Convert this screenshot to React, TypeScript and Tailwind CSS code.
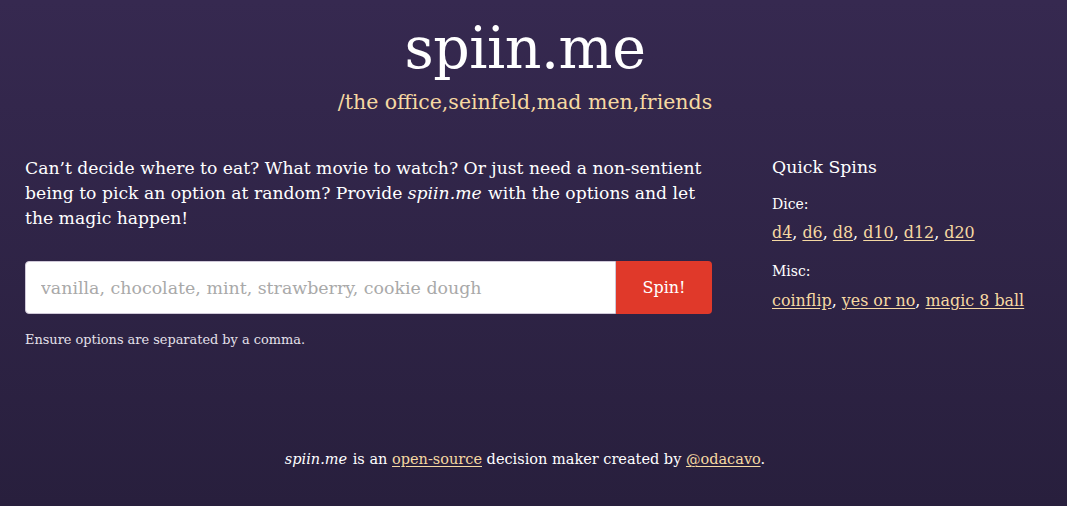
const slab = { fontFamily: '"DejaVu Serif", "Liberation Serif", serif' };

const dice = ["d4", "d6", "d8", "d10", "d12", "d20"];
const misc = ["coinflip", "yes or no", "magic 8 ball"];

const LinkList = ({ items }: { items: string[] }) => (
  <p className="text-[15.9px] leading-6">
    {items.map((item, i) => (
      <span key={item}>
        <a href="#" className="text-[#f6d9a2] underline underline-offset-2">
          {item}
        </a>
        {i < items.length - 1 && ", "}
      </span>
    ))}
  </p>
);

export default function App() {
  return (
    <div
      className="min-h-[506px] w-full bg-gradient-to-b from-[#362950] to-[#281f3d] text-white"
      style={slab}
    >
      <header className="flex flex-col items-center pt-[14px] pr-[17px]">
        <h1 className="text-[57px] leading-[68px] tracking-[-0.5px]">spiin.me</h1>
        <p className="mt-[8px] text-[20.5px] leading-6 text-[#f6d9a2]">
          /the office,seinfeld,mad men,friends
        </p>
      </header>

      <main className="mt-[42px] grid grid-cols-[687px_1fr] gap-[60px] px-[25px]">
        <section>
          <p className="text-[17.2px] leading-[25px]">
            Can’t decide where to eat? What movie to watch? Or just need a non-sentient
            being to pick an option at random? Provide <em className="pr-[1px]">spiin.me</em> with
            the options and let the magic happen!
          </p>

          <form className="mt-[30px] flex h-[53px] rounded-[4px]" onSubmit={(e) => e.preventDefault()}>
            <input
              className="h-full flex-1 rounded-l-[4px] border border-[#cfc8d8] bg-white px-[15px] text-[17.4px] text-gray-700 outline-none placeholder:text-[#a9a9a9]"
              style={slab}
              placeholder="vanilla, chocolate, mint, strawberry, cookie dough"
            />
            <button
              type="submit"
              className="h-full w-[96px] rounded-r-[4px] bg-[#e0392a] text-[16px] text-white"
              style={slab}
            >
              Spin!
            </button>
          </form>

          <p className="mt-[16px] text-[12.9px] leading-5 text-[#e4e0ea]">
            Ensure options are separated by a comma.
          </p>
        </section>

        <aside className="-mt-[1px]">
          <h2 className="text-[17.3px] leading-6">Quick Spins</h2>
          <p className="mt-[13px] text-[14px] leading-6">Dice:</p>
          <div className="mt-[5px]">
            <LinkList items={dice} />
          </div>
          <p className="mt-[14px] text-[14px] leading-6">Misc:</p>
          <div className="mt-[6px]">
            <LinkList items={misc} />
          </div>
        </aside>
      </main>

      <footer className="mt-[97px] pb-[32px] pr-[17px] text-center text-[14.5px] leading-6">
        <em className="pr-[1px]">spiin.me</em> is an{" "}
        <a href="#" className="text-[#f6d9a2] underline underline-offset-2">
          open-source
        </a>{" "}
        decision maker created by{" "}
        <a href="#" className="text-[#f6d9a2] underline underline-offset-2">
          @odacavo
        </a>
        .
      </footer>
    </div>
  );
}
